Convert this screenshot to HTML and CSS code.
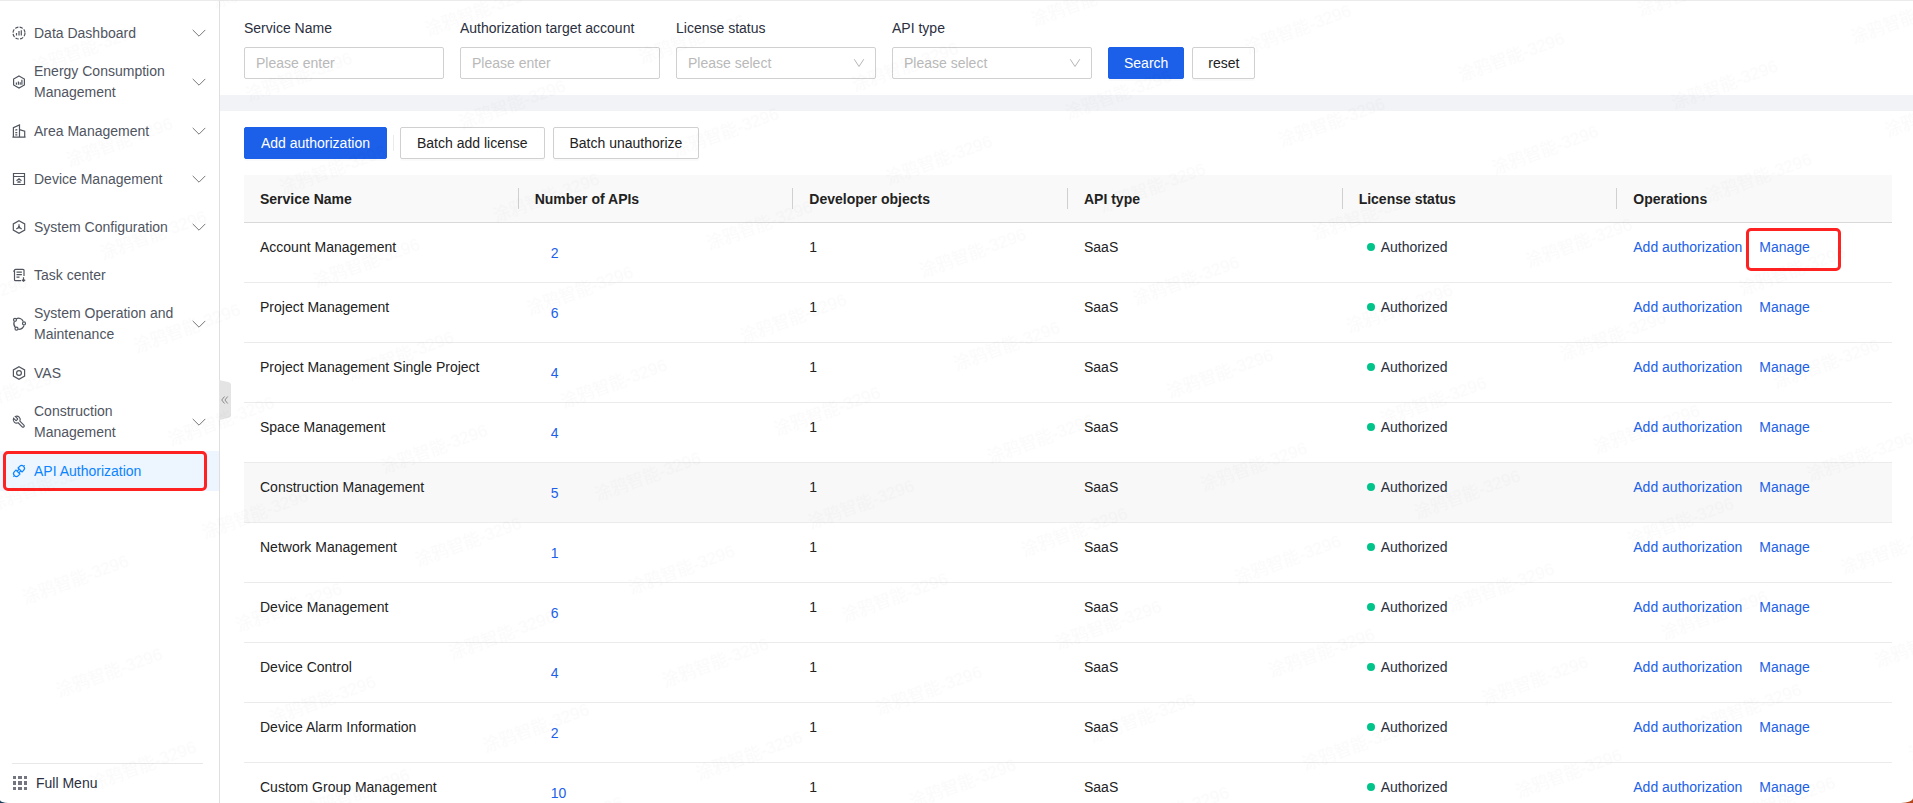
FILE: index.html
```html
<!DOCTYPE html>
<html lang="en">
<head>
<meta charset="utf-8">
<title>API Authorization</title>
<link rel="stylesheet" href="styles.css">
</head>
<body>
<div class="app">
  <aside class="sidebar">
    <nav class="menu" aria-label="Main">
      <a class="menu-item" href="#"><svg class="icon" viewBox="0 0 14 14"><circle cx="7" cy="7" r="6" stroke-dasharray="3.4 1.3"/><path d="M4.500 7v2.500M7 5v4.500M9.300 4.300v5.200"/></svg><span class="menu-text">Data Dashboard</span><svg class="chevron" viewBox="0 0 14 8"><path d="M.7 .9 7 7.200 13.300 .9"/></svg></a>
      <a class="menu-item" href="#"><svg class="icon" viewBox="0 0 14 14"><path d="M7 .9 12.400 4v6L7 13.100 1.600 10V4zM4.400 7.500v2.200M6.400 6.600v3.100M8.200 7.300v2.400M9.900 4.800v4.900"/></svg><span class="menu-text">Energy Consumption Management</span><svg class="chevron" viewBox="0 0 14 8"><path d="M.7 .9 7 7.200 13.300 .9"/></svg></a>
      <a class="menu-item" href="#"><svg class="icon" viewBox="0 0 14 14"><path d="M.4 13.200h13.200M1.400 13V3.700L7.500 1v12M7.500 5.600l5.200 1.500v6M3.300 6.200l2-.5M3.300 8.600h2M3.300 10.800h2"/></svg><span class="menu-text">Area Management</span><svg class="chevron" viewBox="0 0 14 8"><path d="M.7 .9 7 7.200 13.300 .9"/></svg></a>
      <a class="menu-item" href="#"><svg class="icon" viewBox="0 0 14 14"><path d="M1.500 1.500h11v11h-11zM1.500 4.500h11M4.500 8.800 7 6.700l2.500 2.100M5.300 10.200h3.400M7 8.800v1.400"/></svg><span class="menu-text">Device Management</span><svg class="chevron" viewBox="0 0 14 8"><path d="M.7 .9 7 7.200 13.300 .9"/></svg></a>
      <a class="menu-item" href="#"><svg class="icon" viewBox="0 0 14 14"><path d="M7 .7 12.700 3.900v6.200L7 13.300 1.300 10.100V3.900zM7 4.300v3M7 7.300 4.300 9M7 7.300 9.700 9"/><circle cx="7" cy="7.300" r=".6"/></svg><span class="menu-text">System Configuration</span><svg class="chevron" viewBox="0 0 14 8"><path d="M.7 .9 7 7.200 13.300 .9"/></svg></a>
      <a class="menu-item" href="#"><svg class="icon" viewBox="0 0 14 14"><path d="M12 8V2.300q0-1-1-1H3.500q-1 0-1 1v9.400q0 1 1 1H9M1.200 3.200h1.300M4.500 4.200h5.400M4.500 6.700h5.400M4.500 9.200h3M11.500 9.300v4M9.800 11.700l1.700 1.600 1.700-1.600"/></svg><span class="menu-text">Task center</span></a>
      <a class="menu-item" href="#"><svg class="icon" viewBox="0 0 14 14"><path d="M4.300 1.700c2.600-1.100 5.600-.3 7 2.800M12 8.500c-.8 2.300-2.800 3.900-5.700 3.800M3.300 10.300C1.800 8.500 1.500 6.200 2.300 4.400"/><circle cx="3" cy="2.800" r="1.500"/><circle cx="12" cy="6.400" r="1.500"/><circle cx="4.500" cy="11.700" r="1.500"/></svg><span class="menu-text">System Operation and Maintenance</span><svg class="chevron" viewBox="0 0 14 8"><path d="M.7 .9 7 7.200 13.300 .9"/></svg></a>
      <a class="menu-item" href="#"><svg class="icon" viewBox="0 0 14 14"><path d="M7 .7 12.600 3.900v6.200L7 13.300 1.400 10.100V3.900z"/><circle cx="7" cy="7" r="2.400"/></svg><span class="menu-text">VAS</span></a>
      <a class="menu-item" href="#"><svg class="icon" viewBox="0 0 14 14"><path transform="translate(14 0) scale(-.58 .58)" stroke-width="2" d="M14.700 6.300a1 1 0 0 0 0 1.400l1.600 1.600a1 1 0 0 0 1.400 0l3.770-3.770a6 6 0 0 1-7.940 7.940l-6.910 6.910a2.120 2.120 0 0 1-3-3l6.910-6.910a6 6 0 0 1 7.940-7.940l-3.760 3.760z"/></svg><span class="menu-text">Construction Management</span><svg class="chevron" viewBox="0 0 14 8"><path d="M.7 .9 7 7.200 13.300 .9"/></svg></a>
      <a class="menu-item active" href="#" aria-current="page"><svg class="icon" viewBox="0 0 14 14"><g transform="rotate(-45 7 7)"><path d="M5.500 4.200H3.300a2.800 2.800 0 0 0 0 5.600h2.200zM8.500 4.200h2.200a2.800 2.800 0 0 1 0 5.600H8.500zM5.500 5.800h3M5.500 8.200h3M.5 7h-1.500M13.500 7H15"/></g></svg><span class="menu-text">API Authorization</span><span class="callout callout-menu"></span></a>
    </nav>
    <a class="full-menu" href="#"><svg class="grid-icon" viewBox="0 0 14 14"><path d="M0 0h3v3H0zM5 0h4v3H5zM11 0h3v3h-3zM0 5h3v4H0zM5 5h4v4H5zM11 5h3v4h-3zM0 11h3v3H0zM5 11h4v3H5zM11 11h3v3h-3z"/></svg>Full Menu</a>
    <button class="collapse" type="button" aria-label="Collapse menu"><svg viewBox="0 0 12 40"><path class="handle" d="M0 0 9 2q3 .6 3 3v30q0 2.400-3 3L0 40z"/><path class="arrows" d="M5.500 16.500 2.700 20l2.800 3.500M8.700 16.500 5.900 20l2.800 3.500"/></svg></button>
  </aside>
  <main class="content">
    <form class="filters">
      <div class="field"><label for="service">Service Name</label><input id="service" type="text" placeholder="Please enter"></div>
      <div class="field"><label for="account">Authorization target account</label><input id="account" type="text" placeholder="Please enter"></div>
      <div class="field"><label for="status">License status</label><div class="select-wrap"><select id="status"><option>Please select</option></select><svg class="select-arrow" viewBox="0 0 12 10"><path d="M1.200 1.200 6 8.500l4.800-7.300"/></svg></div></div>
      <div class="field"><label for="type">API type</label><div class="select-wrap"><select id="type"><option>Please select</option></select><svg class="select-arrow" viewBox="0 0 12 10"><path d="M1.200 1.200 6 8.500l4.800-7.300"/></svg></div></div>
      <div class="form-actions"><button class="btn primary" type="button">Search</button><button class="btn" type="reset">reset</button></div>
    </form>
    <section class="panel">
      <div class="toolbar">
        <button class="btn primary" type="button">Add authorization</button>
        <span class="divider"></span>
        <div class="form-actions"><button class="btn" type="button">Batch add license</button><button class="btn" type="button">Batch unauthorize</button></div>
      </div>
      <table class="table">
        <thead><tr><th>Service Name</th><th>Number of APIs</th><th>Developer objects</th><th>API type</th><th>License status</th><th>Operations</th></tr></thead>
        <tbody>
          <tr><td>Account Management</td><td class="count"><a href="#">2</a></td><td>1</td><td>SaaS</td><td><span class="status">Authorized</span></td><td><div class="ops"><a href="#">Add authorization</a><a class="marked" href="#">Manage<span class="callout callout-manage"></span></a></div></td></tr>
          <tr><td>Project Management</td><td class="count"><a href="#">6</a></td><td>1</td><td>SaaS</td><td><span class="status">Authorized</span></td><td><div class="ops"><a href="#">Add authorization</a><a href="#">Manage</a></div></td></tr>
          <tr><td>Project Management Single Project</td><td class="count"><a href="#">4</a></td><td>1</td><td>SaaS</td><td><span class="status">Authorized</span></td><td><div class="ops"><a href="#">Add authorization</a><a href="#">Manage</a></div></td></tr>
          <tr><td>Space Management</td><td class="count"><a href="#">4</a></td><td>1</td><td>SaaS</td><td><span class="status">Authorized</span></td><td><div class="ops"><a href="#">Add authorization</a><a href="#">Manage</a></div></td></tr>
          <tr class="hovered"><td>Construction Management</td><td class="count"><a href="#">5</a></td><td>1</td><td>SaaS</td><td><span class="status">Authorized</span></td><td><div class="ops"><a href="#">Add authorization</a><a href="#">Manage</a></div></td></tr>
          <tr><td>Network Management</td><td class="count"><a href="#">1</a></td><td>1</td><td>SaaS</td><td><span class="status">Authorized</span></td><td><div class="ops"><a href="#">Add authorization</a><a href="#">Manage</a></div></td></tr>
          <tr><td>Device Management</td><td class="count"><a href="#">6</a></td><td>1</td><td>SaaS</td><td><span class="status">Authorized</span></td><td><div class="ops"><a href="#">Add authorization</a><a href="#">Manage</a></div></td></tr>
          <tr><td>Device Control</td><td class="count"><a href="#">4</a></td><td>1</td><td>SaaS</td><td><span class="status">Authorized</span></td><td><div class="ops"><a href="#">Add authorization</a><a href="#">Manage</a></div></td></tr>
          <tr><td>Device Alarm Information</td><td class="count"><a href="#">2</a></td><td>1</td><td>SaaS</td><td><span class="status">Authorized</span></td><td><div class="ops"><a href="#">Add authorization</a><a href="#">Manage</a></div></td></tr>
          <tr><td>Custom Group Management</td><td class="count"><a href="#">10</a></td><td>1</td><td>SaaS</td><td><span class="status">Authorized</span></td><td><div class="ops"><a href="#">Add authorization</a><a href="#">Manage</a></div></td></tr>
        </tbody>
      </table>
    </section>
  </main>
</div>
<svg class="watermark" aria-hidden="true"><defs><pattern id="mark" width="191" height="99" patternUnits="userSpaceOnUse" patternTransform="translate(1168 405) rotate(-20)"><text x="4" y="93">涂鸦智能-3296</text></pattern></defs><rect width="100%" height="100%" fill="url(#mark)"/></svg>
</body>
</html>
```
FILE: styles.css
```css
* { box-sizing: border-box; }
body {
  margin: 0;
  font: 14px/22px "Liberation Sans", Arial, "Noto Sans CJK SC", sans-serif;
  color: #222;
  background: linear-gradient(90deg, #0f3a5c, #b5481c);
}
a { color: #1c5fe8; text-decoration: none; }
button, input, select { font: inherit; color: inherit; }

.app {
  display: flex;
  height: 100vh;
  overflow: hidden;
  border-top: 1px solid #ebebeb;
  border-radius: 0 0 12px 8px / 0 0 5px 3px;
  background: #fff;
}

.sidebar {
  position: relative;
  flex: none;
  display: flex;
  flex-direction: column;
  width: 220px;
  border-right: 1px solid #dfdfdf;
}
.menu {
  flex: 1;
  display: flex;
  flex-direction: column;
  gap: 8px;
  padding-top: 12px;
}
.menu-item {
  position: relative;
  display: flex;
  align-items: center;
  min-height: 40px;
  padding: 0 13px 0 12px;
  line-height: 21px;
  color: #50555f;
}
.menu-item.active { background: #edf5ff; color: #0a84ff; }
.menu-text { flex: 1; }
.icon, .chevron {
  flex: none;
  fill: none;
  stroke: currentColor;
}
.icon { width: 14px; height: 14px; margin-right: 8px; stroke-width: 1.2; overflow: visible; }
.chevron { width: 14px; height: 8px; margin-left: 8px; stroke: #777; }

.full-menu {
  display: flex;
  align-items: center;
  gap: 9px;
  height: 40px;
  margin-left: 12px;
  margin-right: 16px;
  padding-left: 1px;
  padding-bottom: 2px;
  border-top: 1px solid #e8e8e8;
  color: #2b2f3e;
}
.grid-icon { width: 14px; height: 14px; fill: #73757f; }

.collapse {
  position: absolute;
  left: 219px;
  top: 379px;
  width: 12px;
  height: 40px;
  padding: 0;
  border: 0;
  background: none;
}
.collapse svg { display: block; width: 12px; height: 40px; }
.handle { fill: #e4e4e5; }
.arrows { fill: none; stroke: #8a8a8a; }

.callout {
  position: absolute;
  border: 3px solid #ff2222;
  border-radius: 5px;
  pointer-events: none;
}
.callout-menu { top: 0; bottom: 0; left: 3px; right: 12px; }
.callout-manage { top: -8px; bottom: -13px; left: -13px; right: -31px; }

.content { flex: 1; min-width: 0; }
.filters {
  display: flex;
  align-items: flex-end;
  gap: 16px;
  padding: 16px 24px;
  border-bottom: 16px solid #f2f3f6;
}
.field { display: flex; flex-direction: column; gap: 8px; width: 200px; color: #2b2f3e; }
.field input, .field select {
  width: 100%;
  height: 32px;
  padding: 0 11px;
  border: 1px solid #d0d0d0;
  border-radius: 2px;
  background: #fff;
}
.field input::placeholder { color: #b9b9b9; opacity: 1; }
.field select { display: block; appearance: none; color: #b9b9b9; }
.select-wrap { position: relative; }
.select-arrow {
  position: absolute;
  right: 11px;
  top: 11px;
  width: 12px;
  height: 10px;
  fill: none;
  stroke: #b5b5b5;
  pointer-events: none;
}
.form-actions { display: flex; gap: 8px; }
.btn {
  height: 32px;
  padding: 0 15px;
  border: 1px solid #d0d0d0;
  border-radius: 2px;
  background: #fff;
  box-shadow: 0 2px 0 rgba(0, 0, 0, .02);
}
.btn.primary { background: #1c5fe8; border-color: #1c5fe8; color: #fff; }
.toolbar .btn { padding: 0 16px; }

.panel { padding: 16px 21px 0 24px; }
.toolbar { display: flex; align-items: center; padding-bottom: 16px; }
.divider { width: 1px; height: 16px; margin: 0 6px; background: #ebebeb; }

.table {
  width: 100%;
  table-layout: fixed;
  border-collapse: separate;
  border-spacing: 0;
}
th {
  position: relative;
  height: 48px;
  padding: 0 16px;
  border-bottom: 1px solid #d9d9d9;
  background: #f9f9f9;
  text-align: left;
}
th:not(:last-child)::after {
  content: "";
  position: absolute;
  right: 0;
  top: 13px;
  width: 1px;
  height: 21px;
  background: #d0d0d0;
}
td {
  height: 60px;
  padding: 13px 16px;
  border-bottom: 1px solid #ebebeb;
  vertical-align: top;
}
.hovered td { background: #f8f8f8; }
td.count { padding: 19px 32px 0; }
.status { display: flex; align-items: center; gap: 6px; padding-left: 8px; color: #2b2f3e; }
.status::before { content: ""; width: 8px; height: 8px; border-radius: 50%; background: #00c48a; }
.ops { display: flex; gap: 17px; }
.marked { position: relative; }

.watermark {
  position: fixed;
  inset: 0;
  width: 100%;
  height: 100%;
  pointer-events: none;
}
.watermark text {
  font: 17px "Liberation Sans", "Noto Sans CJK SC", sans-serif;
  fill: rgba(0, 0, 0, .02);
}
```
